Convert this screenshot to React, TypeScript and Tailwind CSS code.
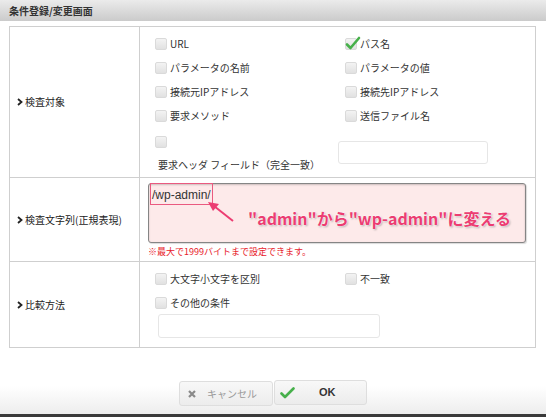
import type { ReactNode } from 'react';

function Box({ checked }: { checked?: boolean }) {
  return (
    <span className="relative inline-block h-[12px] w-[12px] shrink-0 rounded-[2px] border border-[#dadada] bg-gradient-to-b from-[#f3f3f3] to-[#e1e1e1]">
      {checked && (
        <svg className="absolute -left-[1px] -top-[3px] h-[15px] w-[16px]" viewBox="0 0 16 15">
          <path
            d="M2 8.5 L5.5 12 L14 2"
            stroke="#47b04b"
            strokeWidth="2.6"
            fill="none"
            strokeLinecap="round"
            strokeLinejoin="round"
          />
        </svg>
      )}
    </span>
  );
}

function Check({ label, checked }: { label: string; checked?: boolean }) {
  return (
    <label className="flex h-[24px] items-center gap-[3px]">
      <Box checked={checked} />
      <span className="leading-none">{label}</span>
    </label>
  );
}

function Chevron() {
  return (
    <svg className="mr-[2px] h-[8px] w-[6px]" viewBox="0 0 6 8">
      <path d="M1 1 L4.5 4 L1 7" stroke="#222" strokeWidth="1.8" fill="none" />
    </svg>
  );
}

function Row({ label, h, last, children }: { label: string; h: string; last?: boolean; children: ReactNode }) {
  return (
    <div className={`flex ${h} ${last ? '' : 'border-b border-[#cfcfcf]'}`}>
      <div className="flex w-[130px] shrink-0 items-center border-r border-[#cfcfcf] pl-[7px] text-[#222]">
        <Chevron />
        <span className="leading-none">{label}</span>
      </div>
      <div className="flex-1">{children}</div>
    </div>
  );
}

export default function App() {
  return (
    <div className="flex h-[417px] w-[546px] flex-col bg-white font-['Noto_Sans_CJK_JP',sans-serif] text-[10px] text-[#333]">
      <div className="flex h-[21px] items-center bg-gradient-to-b from-[#ebebeb] to-[#cbcbcb] px-[9px] text-[10px] font-bold text-[#333]">
        条件登録/変更画面
      </div>

      <div className="ml-[9px] mr-[10px] mt-[5px] border border-[#cfcfcf]">
        <Row label="検査対象" h="h-[151px]">
          <div className="pl-[15px] pt-[5px]">
            <div className="grid grid-cols-[190px_1fr]">
              <Check label="URL" />
              <Check label="パス名" checked />
              <Check label="パラメータの名前" />
              <Check label="パラメータの値" />
              <Check label="接続元IPアドレス" />
              <Check label="接続先IPアドレス" />
              <Check label="要求メソッド" />
              <Check label="送信ファイル名" />
            </div>
            <div className="grid grid-cols-[183px_150px]">
              <div className="flex flex-col">
                <span className="mt-[8px]">
                  <Box />
                </span>
                <span className="ml-[3px] mt-[8px] leading-[12px]">要求ヘッダ フィールド（完全一致）</span>
              </div>
              <div className="mt-[13px] h-[23px] w-[150px] rounded-[3px] border border-[#e6e6e6] bg-white" />
            </div>
          </div>
        </Row>

        <Row label="検査文字列(正規表現)" h="h-[84px]">
          <div className="pl-[8px] pr-[9px] pt-[5px]">
            <div className="relative h-[60px] rounded-[3px] border border-[#858585] bg-[#fdeaea] shadow-[inset_0_1px_2px_rgba(0,0,0,0.2),1px_1px_1px_rgba(0,0,0,0.15)]">
              <span className="absolute left-[3px] top-[4px] font-['Liberation_Sans',sans-serif] text-[12px] leading-[14px] text-[#333]">
                /wp-admin/
              </span>
              <span className="absolute left-[1px] -top-[1px] h-[22px] w-[63px] border-[1.5px] border-[#ea5a80]" />
              <svg className="absolute left-0 top-0 h-[60px] w-[120px]" viewBox="0 0 120 60">
                <line x1="84" y1="37" x2="65" y2="22" stroke="#ec3d72" strokeWidth="2" />
                <path d="M59 18 L70 20 L64 27 Z" fill="#ec3d72" />
              </svg>
              <span className="absolute left-[99px] top-[24px] whitespace-nowrap text-[16px] font-bold leading-[20px] text-[#ec3d72] [text-shadow:0_0_2px_#fff,0_0_2px_#fff,1px_1px_2px_rgba(0,0,0,0.35)]">
                "admin"から"wp-admin"に変える
              </span>
            </div>
            <p className="mt-[4px] text-[9px] leading-[10px] text-[#e8202a]">※最大で1999バイトまで設定できます。</p>
          </div>
        </Row>

        <Row label="比較方法" h="h-[85px]" last>
          <div className="pl-[15px] pt-[5px]">
            <div className="grid grid-cols-[190px_1fr]">
              <Check label="大文字小文字を区別" />
              <Check label="不一致" />
              <Check label="その他の条件" />
            </div>
            <div className="ml-[3px] mt-[-1px] h-[24px] w-[222px] rounded-[3px] border border-[#e6e6e6] bg-white" />
          </div>
        </Row>
      </div>

      <div className="flex flex-1 flex-col bg-[linear-gradient(to_bottom,#fff_55%,#ebebeb)]">
        <div className="mt-[33px] flex justify-center gap-[1px]">
          <button className="flex h-[25px] w-[94px] items-center rounded-[3px] border border-[#dedede] bg-gradient-to-b from-[#f8f8f8] to-[#ececec] pl-[8px] text-[10px] text-[#999]">
            <svg className="h-[8px] w-[8px]" viewBox="0 0 8 8">
              <path d="M1 1 L7 7 M7 1 L1 7" stroke="#8a8a8a" strokeWidth="2.2" />
            </svg>
            <span className="ml-[11px]">キャンセル</span>
          </button>
          <button className="-mt-[1px] flex h-[25px] w-[93px] items-center rounded-[3px] border border-[#dedede] bg-gradient-to-b from-[#f8f8f8] to-[#ececec] pl-[5px] text-[11px] font-bold text-[#333]">
            <svg className="h-[12px] w-[15px]" viewBox="0 0 15 12">
              <path d="M1.5 6.5 L5 10 L13.5 1.5" stroke="#47b04b" strokeWidth="2.6" fill="none" strokeLinecap="round" strokeLinejoin="round" />
            </svg>
            <span className="ml-[24px] font-['Liberation_Sans',sans-serif]">OK</span>
          </button>
        </div>
        <div className="mt-auto h-[3px] bg-[#3a3a3a]" />
      </div>
    </div>
  );
}
